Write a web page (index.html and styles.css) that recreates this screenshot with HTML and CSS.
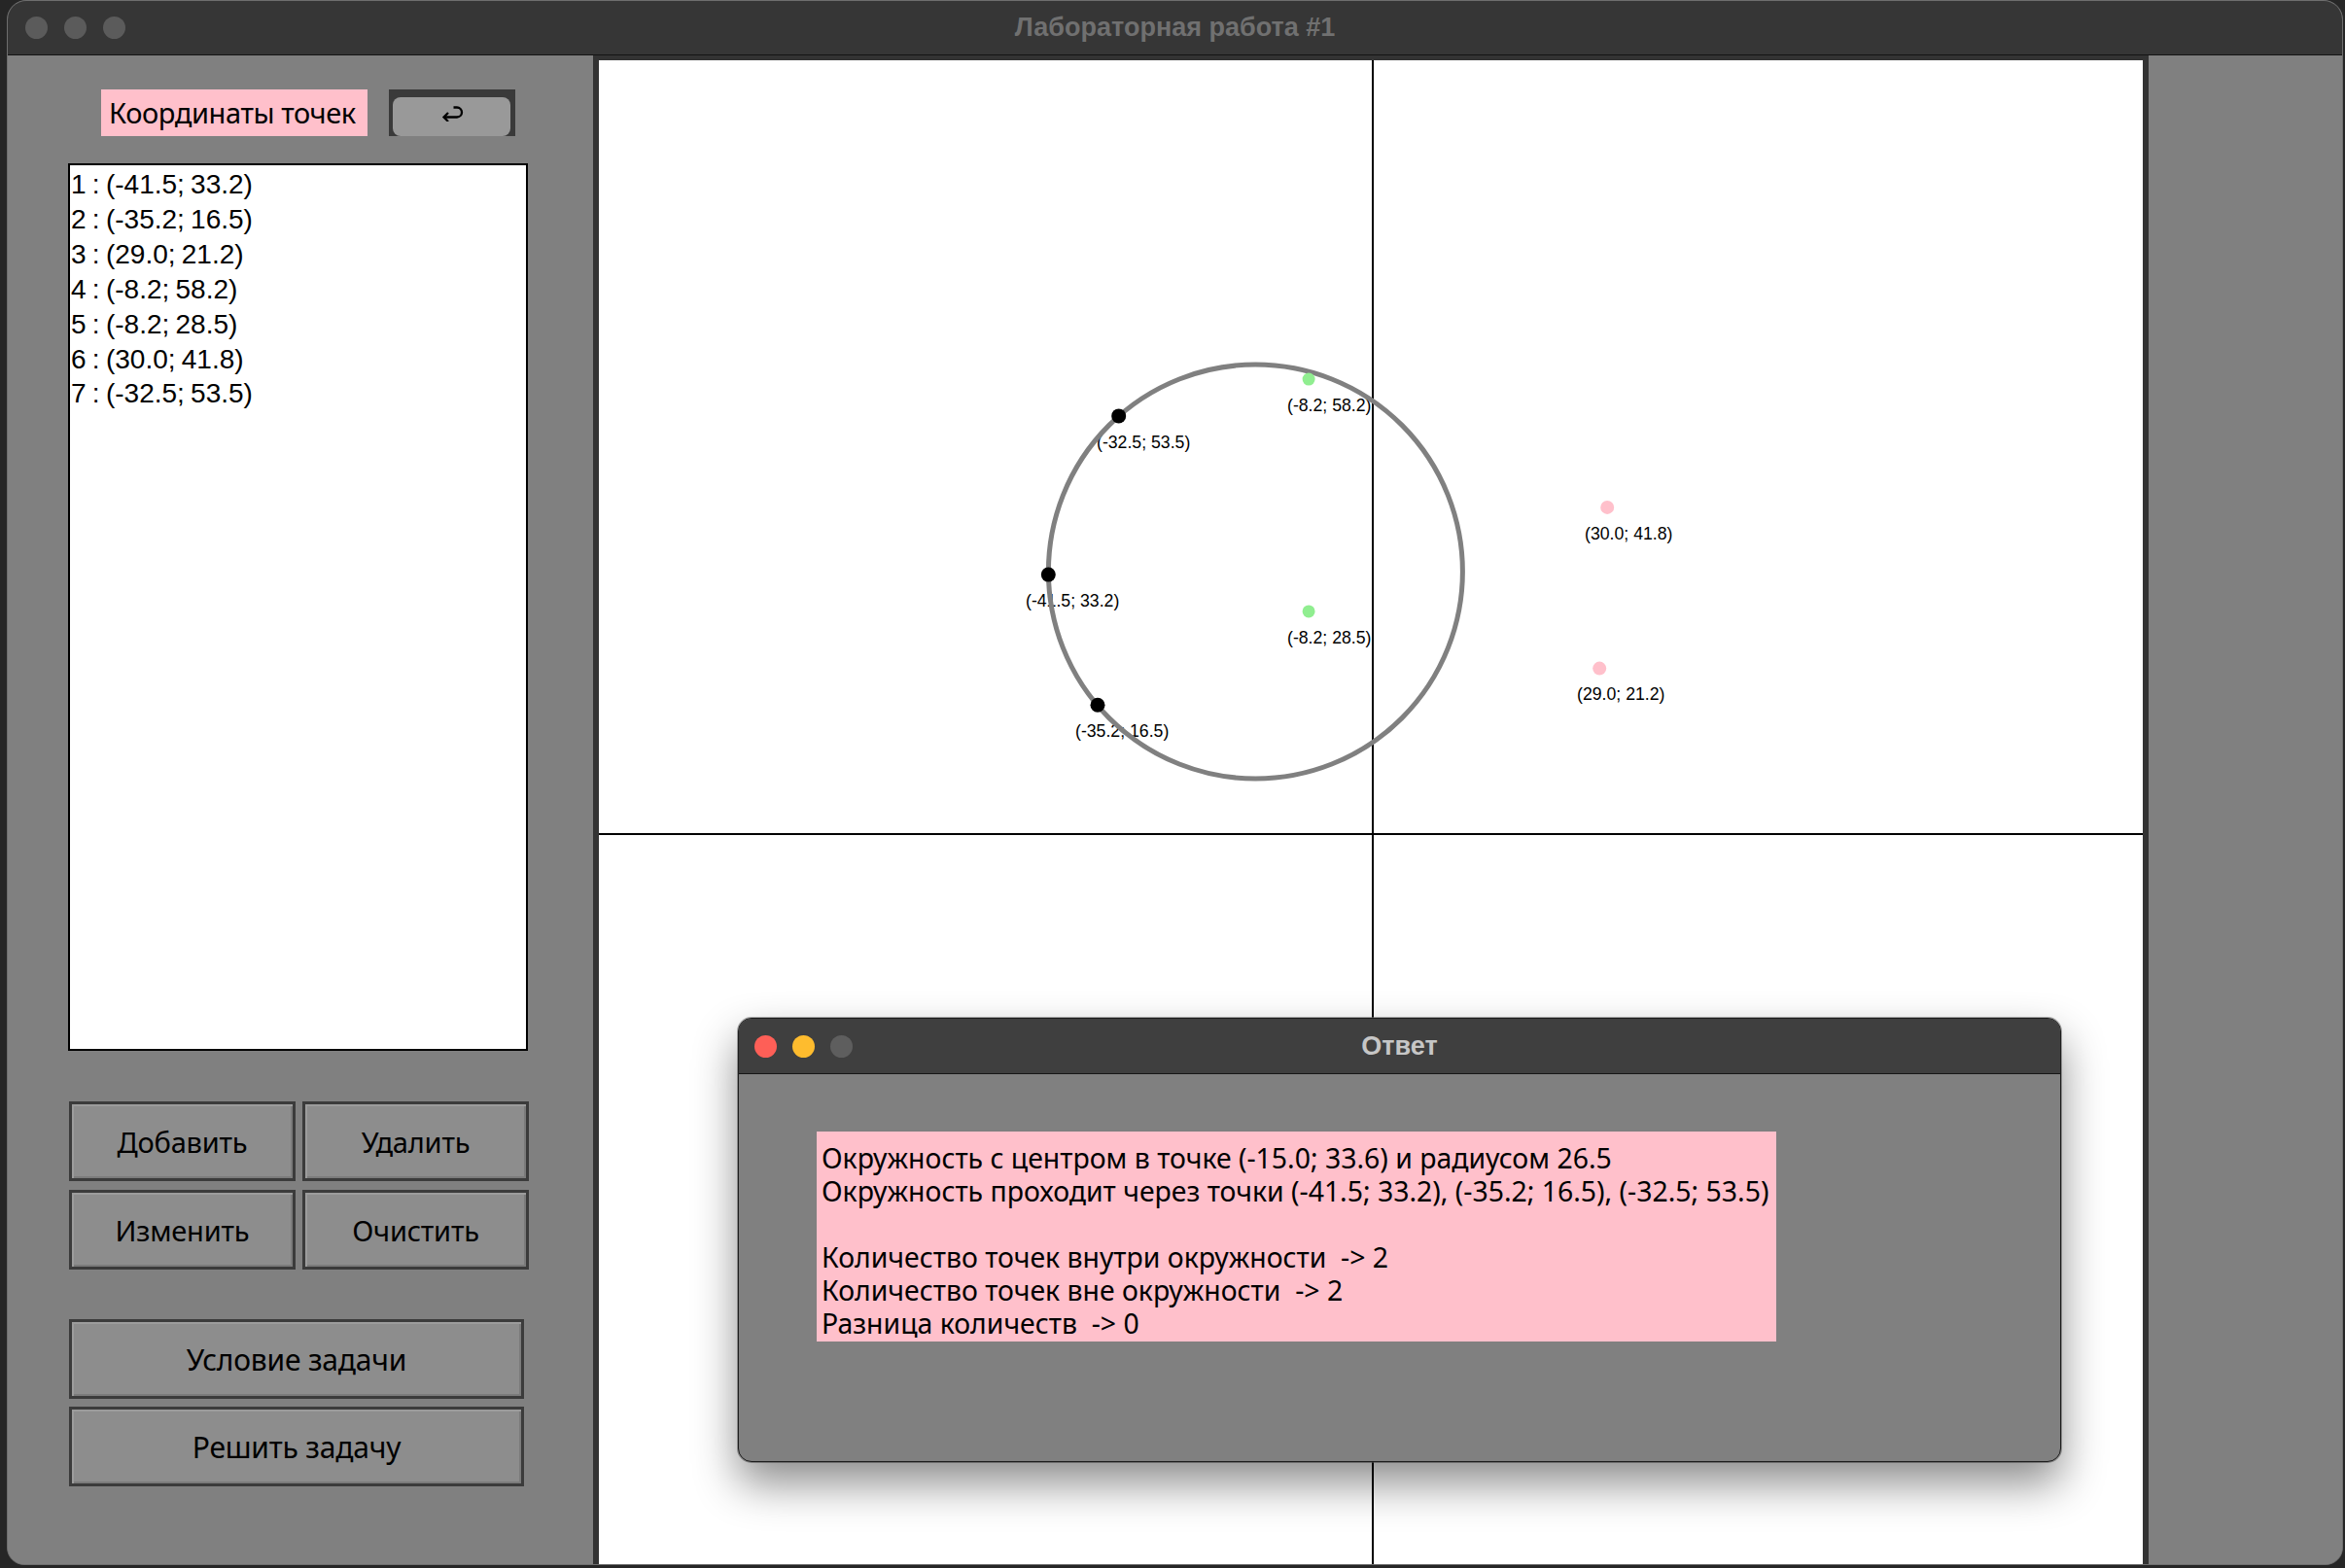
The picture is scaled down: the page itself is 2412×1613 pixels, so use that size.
FILE: index.html
```html
<!DOCTYPE html>
<html lang="ru">
<head>
<meta charset="utf-8">
<title>Лабораторная работа #1</title>
<link rel="stylesheet" href="styles.css">
</head>
<body>
<div class="window">
  <div class="titlebar">
    <div class="lights">
      <span class="light"></span><span class="light"></span><span class="light"></span>
    </div>
    <div class="title">Лабораторная работа #1</div>
    <div></div>
  </div>
  <div class="content">
    <aside class="panel">
      <div class="panel-head">
        <div class="label">Координаты точек</div>
        <button class="back" type="button"><span class="back-inner">
          <svg class="back-icon" width="24" height="17" viewBox="0 0 24 17"><path d="M3.5 12.5 H17 A5 5 0 0 0 17 2.5 H13.5" fill="none" stroke="#000" stroke-width="2.3"/><path d="M8 8 L3.5 12.5 L8 17" fill="none" stroke="#000" stroke-width="2.3"/></svg>
        </span></button>
      </div>
      <div class="listbox">
        <div>1 : (-41.5; 33.2)</div>
        <div>2 : (-35.2; 16.5)</div>
        <div>3 : (29.0; 21.2)</div>
        <div>4 : (-8.2; 58.2)</div>
        <div>5 : (-8.2; 28.5)</div>
        <div>6 : (30.0; 41.8)</div>
        <div>7 : (-32.5; 53.5)</div>
      </div>
      <div class="grid4">
        <button class="btn" type="button">Добавить</button>
        <button class="btn" type="button">Удалить</button>
        <button class="btn" type="button">Изменить</button>
        <button class="btn" type="button">Очистить</button>
      </div>
      <div class="stack">
        <button class="btn wide" type="button">Условие задачи</button>
        <button class="btn wide" type="button">Решить задачу</button>
      </div>
    </aside>
    <main class="canvas-frame">
      <div class="canvas">
        <svg class="plot" width="1588" height="1547" viewBox="0 0 1588 1547">
          <g class="labels">
            <text x="439" y="562">(-41.5; 33.2)</text>
            <text x="490" y="696">(-35.2; 16.5)</text>
            <text x="1006" y="658">(29.0; 21.2)</text>
            <text x="708" y="361">(-8.2; 58.2)</text>
            <text x="708" y="600">(-8.2; 28.5)</text>
            <text x="1014" y="493">(30.0; 41.8)</text>
            <text x="512" y="399">(-32.5; 53.5)</text>
          </g>
          <line x1="796" y1="0" x2="796" y2="1547" stroke="#000" stroke-width="2"/>
          <line x1="0" y1="796" x2="1588" y2="796" stroke="#000" stroke-width="2"/>
          <circle cx="675.4" cy="526" r="213" fill="none" stroke="#808080" stroke-width="5"/>
          <circle cx="462.3" cy="529.1" r="7.5" fill="#000"/>
          <circle cx="513" cy="663.3" r="7.5" fill="#000"/>
          <circle cx="534.7" cy="365.9" r="7.5" fill="#000"/>
          <circle cx="730.1" cy="328.1" r="6.5" fill="#90ee90"/>
          <circle cx="730.1" cy="566.9" r="6.5" fill="#90ee90"/>
          <circle cx="1029.2" cy="625.6" r="7" fill="#ffc0cb"/>
          <circle cx="1037.2" cy="459.9" r="7" fill="#ffc0cb"/>
        </svg>
      </div>
    </main>
    <div class="right-pane"></div>
  </div>

  <div class="dialog">
    <div class="titlebar dialog-bar">
      <div class="lights">
        <span class="light red"></span><span class="light yellow"></span><span class="light off"></span>
      </div>
      <div class="title dialog-title">Ответ</div>
      <div></div>
    </div>
    <div class="dialog-body">
      <div class="answer">
        <div>Окружность с центром в точке (-15.0; 33.6) и радиусом 26.5</div>
        <div>Окружность проходит через точки (-41.5; 33.2), (-35.2; 16.5), (-32.5; 53.5)</div>
        <div class="blank"></div>
        <div>Количество точек внутри окружности&nbsp; -&gt; 2</div>
        <div>Количество точек вне окружности&nbsp; -&gt; 2</div>
        <div>Разница количеств&nbsp; -&gt; 0</div>
      </div>
    </div>
  </div>
</div>
</body>
</html>
```

FILE: styles.css
```css
html, body {
  margin: 0;
  padding: 0;
}

body {
  width: 2412px;
  height: 1613px;
  overflow: hidden;
  background: #262626;
  font-family: "Noto Sans", "DejaVu Sans", sans-serif;
}

.window {
  position: relative;
  margin-left: 7px;
  width: 2403px;
  height: 1610px;
  box-sizing: border-box;
  border: 1px solid #6e6e6e;
  border-radius: 20px 20px 18px 18px;
  overflow: hidden;
  background: #808080;
}

.titlebar {
  height: 55px;
  background: #363636;
  border-bottom: 1px solid #141414;
  display: grid;
  grid-template-columns: 1fr auto 1fr;
  align-items: center;
}

.lights {
  display: flex;
  gap: 17px;
  padding-left: 18px;
}

.light {
  width: 23px;
  height: 23px;
  border-radius: 50%;
  background: #5b5b5b;
}

.light.red { background: #fe5f57; }
.light.yellow { background: #febc2e; }
.light.off { background: #5e5e5e; }

.title {
  font-family: "Liberation Sans", Arial, sans-serif;
  font-weight: bold;
  font-size: 27px;
  color: #707070;
}

.content {
  display: flex;
  height: 1552px;
}

.panel {
  width: 602px;
  flex: none;
  box-sizing: border-box;
  padding: 35px 0 0 62px;
  display: flex;
  flex-direction: column;
  align-items: flex-start;
  background: #808080;
}

.panel-head {
  display: flex;
  gap: 22px;
  margin-left: 34px;
}

.label {
  width: 274px;
  height: 48px;
  box-sizing: border-box;
  padding-left: 8px;
  background: #ffc0cb;
  font-size: 29px;
  line-height: 48px;
  color: #000;
  letter-spacing: -0.4px;
  white-space: nowrap;
}

.back {
  width: 130px;
  height: 48px;
  box-sizing: border-box;
  padding: 8px 5px 0 4px;
  margin: 0;
  border: 0;
  background: #3a3a3a;
  display: flex;
}

.back-inner {
  flex: 1;
  background: #999999;
  border-radius: 8px;
  display: flex;
  align-items: center;
  justify-content: center;
}

.back-icon {
  margin-bottom: 8px;
}

.listbox {
  margin-top: 28px;
  width: 473px;
  height: 913px;
  box-sizing: border-box;
  border: 2px solid #000;
  background: #fff;
  padding: 2px 0 0 1px;
  font-family: "Liberation Sans", Arial, sans-serif;
  font-size: 28px;
  line-height: 35.9px;
  color: #000;
  word-spacing: -1.5px;
}

.grid4 {
  margin-top: 52px;
  margin-left: 1px;
  display: grid;
  grid-template-columns: 233px 233px;
  grid-auto-rows: 82px;
  column-gap: 7px;
  row-gap: 9px;
}

.stack {
  margin-top: 51px;
  margin-left: 1px;
  width: 468px;
  display: flex;
  flex-direction: column;
  gap: 8px;
}

.btn {
  height: 82px;
  margin: 0;
  padding: 0;
  box-sizing: border-box;
  background: #8d8d8d;
  border: 3px solid #3b3b3b;
  box-shadow: inset 2px 2px 0 #9c9c9c, inset -2px -2px 0 #7b7b7b;
  font-family: "Noto Sans", "DejaVu Sans", sans-serif;
  font-size: 29px;
  color: #000;
  letter-spacing: -0.2px;
}

.btn.wide {
  font-size: 30px;
}

.canvas-frame {
  width: 1600px;
  flex: none;
  box-sizing: border-box;
  border-style: solid;
  border-color: #333333;
  border-width: 5px 6px 0 6px;
  background: #fff;
}

.canvas {
  width: 1588px;
  height: 1547px;
  background: #fff;
}

.plot {
  display: block;
}

.labels text {
  font-family: "Liberation Sans", Arial, sans-serif;
  font-size: 17.7px;
  fill: #000;
}

.right-pane {
  flex: 1;
  background: #808080;
}

.dialog {
  position: absolute;
  left: 751px;
  top: 1046px;
  width: 1361px;
  height: 457px;
  box-sizing: border-box;
  border: 1px solid #1e1e1e;
  border-radius: 14px;
  overflow: hidden;
  background: #808080;
  box-shadow: 0 22px 45px rgba(0, 0, 0, 0.45), 0 0 0 1px rgba(120, 120, 120, 0.6);
}

.dialog-bar {
  height: 56px;
  background: #3f3f3f;
  border-bottom: 1px solid #161616;
}

.dialog-bar .lights {
  padding-left: 16px;
  gap: 16px;
}

.dialog-title {
  color: #c6c6c6;
}

.dialog-body {
  padding: 59px 0 0 80px;
}

.answer {
  width: 987px;
  height: 216px;
  box-sizing: border-box;
  padding: 10px 0 0 5px;
  background: #ffc0cb;
  font-family: "Noto Sans", "DejaVu Sans", sans-serif;
  font-size: 28.4px;
  line-height: 34px;
  color: #000;
  white-space: nowrap;
}

.answer .blank {
  height: 34px;
}
```
